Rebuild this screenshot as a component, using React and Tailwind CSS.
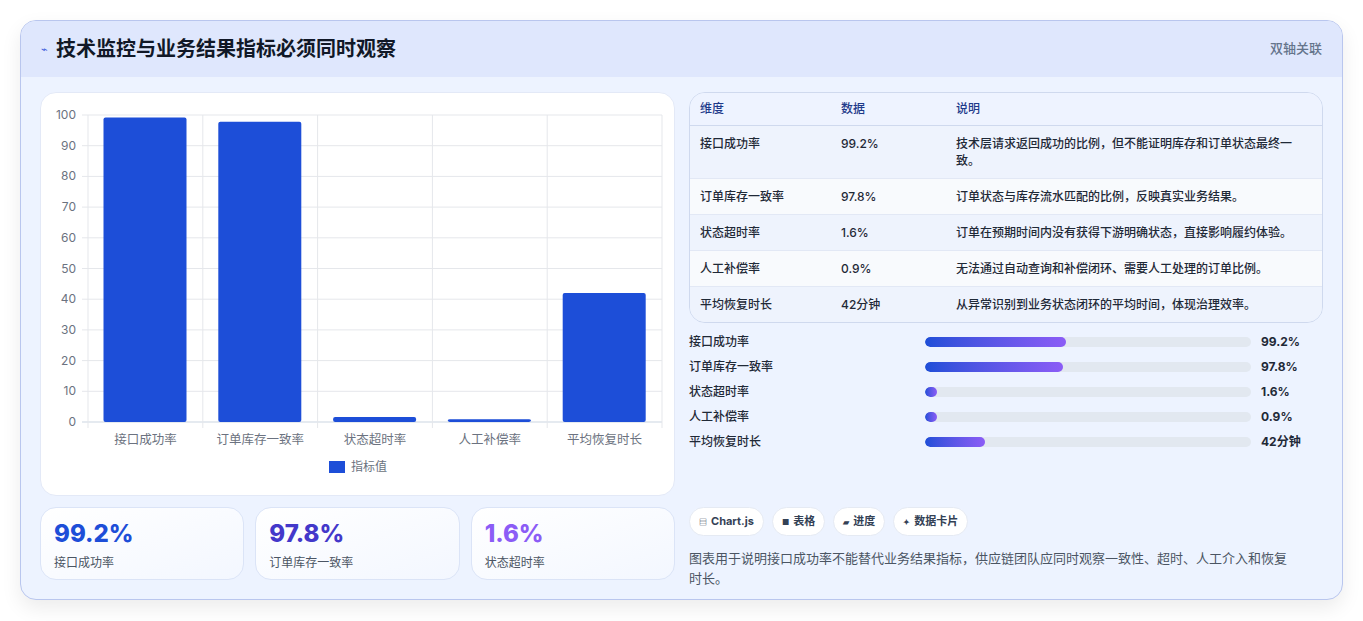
const rows = [
  ["接口成功率", "99.2%", "技术层请求返回成功的比例，但不能证明库存和订单状态最终一致。"],
  ["订单库存一致率", "97.8%", "订单状态与库存流水匹配的比例，反映真实业务结果。"],
  ["状态超时率", "1.6%", "订单在预期时间内没有获得下游明确状态，直接影响履约体验。"],
  ["人工补偿率", "0.9%", "无法通过自动查询和补偿闭环、需要人工处理的订单比例。"],
  ["平均恢复时长", "42分钟", "从异常识别到业务状态闭环的平均时间，体现治理效率。"],
];
const bars = [141, 138, 12, 12, 60];
const values = [99.2, 97.8, 1.6, 0.9, 42];

function Chart() {
  const x0 = 47, x1 = 621, y0 = 22, y1 = 329;
  const cw = (x1 - x0) / 5;
  const ticks = [0, 10, 20, 30, 40, 50, 60, 70, 80, 90, 100];
  const sy = (v) => y1 - (v / 100) * (y1 - y0);
  return (
    <svg width="635" height="404" className="block">
      {ticks.map((t) => (
        <g key={t}>
          <line x1={x0 - 6} x2={x1} y1={sy(t)} y2={sy(t)} stroke={t === 0 ? "#cbd5e1" : "#e5e7eb"} />
          <text x={x0 - 12} y={sy(t) + 4} textAnchor="end" fontSize="12" fill="#6b7280">{t}</text>
        </g>
      ))}
      {[0, 1, 2, 3, 4, 5].map((i) => (
        <line key={i} x1={x0 + i * cw} x2={x0 + i * cw} y1={y0} y2={y1 + 6} stroke="#e5e7eb" />
      ))}
      {values.map((v, i) => (
        <g key={i}>
          <rect x={x0 + i * cw + 15.5} y={sy(v)} width={83} height={Math.max(y1 - sy(v), 1.5)} rx="2" fill="#1d4ed8" />
          <text x={x0 + i * cw + cw / 2} y={351} textAnchor="middle" fontSize="12.5" fill="#6b7280">{rows[i][0]}</text>
        </g>
      ))}
      <rect x="288" y="368" width="16" height="12" fill="#1d4ed8" />
      <text x="310" y="378" fontSize="12" fill="#6b7280">指标值</text>
    </svg>
  );
}

export default function App() {
  return (
    <div className="min-h-[621px] bg-white p-5 pb-0" style={{ fontFamily: "Inter, 'Noto Sans CJK SC', sans-serif" }}>
      <div className="rounded-2xl border border-[#b9c6ee] bg-[#edf3ff] shadow-[0_8px_20px_rgba(0,0,0,0.08)] overflow-hidden h-[580px]">
        <div className="h-[56px] bg-[#dfe7fd] flex items-center justify-between px-5">
          <div className="flex items-center gap-2">
            <span className="text-[#3b5bdb] text-[11px]">⌁</span>
            <span className="text-[20px] font-bold text-[#111827]">技术监控与业务结果指标必须同时观察</span>
          </div>
          <span className="text-[13px] font-medium text-[#64748b]">双轴关联</span>
        </div>
        <div className="flex gap-[14px] pl-[19px] pt-[15px]">
          <div className="w-[635px] flex flex-col gap-[11px]">
            <div className="bg-white rounded-2xl border border-[#e3e9f7] h-[404px] overflow-hidden"><Chart /></div>
            <div className="grid grid-cols-3 gap-[11px]">
              {[["99.2%", "接口成功率", "text-[#1d4ed8]"], ["97.8%", "订单库存一致率", "text-[#4338ca]"], ["1.6%", "状态超时率", "text-[#8b5cf6]"]].map(([v, l, c]) => (
                <div key={l} className="h-[73px] rounded-2xl border border-[#dbe4f7] bg-gradient-to-br from-white to-[#f3f7ff] px-[13px] pt-[10px]">
                  <div className={`text-[24px] font-extrabold leading-[32px] ${c}`}>{v}</div>
                  <div className="text-[12px] text-[#4b5563] mt-[4px]">{l}</div>
                </div>
              ))}
            </div>
          </div>
          <div className="w-[634px]">
            <div className="rounded-2xl border border-[#cfd9ee] overflow-hidden text-[12px] font-medium text-[#1f2937]">
              <div className="flex h-[33px] items-center bg-[#eef3ff] text-[#1e3a8a] border-b border-[#cfd9ee]">
                <div className="w-[151px] pl-[10px]">维度</div>
                <div className="w-[115px]">数据</div>
                <div className="flex-1">说明</div>
              </div>
              {rows.map((r, i) => (
                <div key={i} className={`flex items-start py-[8px] border-b last:border-b-0 border-[#e2e8f5] ${i % 2 ? "bg-[#f8fafd]" : "bg-[#eef3fd]"}`}>
                  <div className="w-[151px] pl-[10px] leading-[17px] py-[1px]">{r[0]}</div>
                  <div className="w-[115px] leading-[17px] py-[1px]">{r[1]}</div>
                  <div className="flex-1 pr-[16px] leading-[17px] py-[1px]">{r[2]}</div>
                </div>
              ))}
            </div>
            <div className="mt-[10px] flex flex-col gap-[7px]">
              {rows.map((r, i) => (
                <div key={i} className="flex items-center h-[18px] text-[12px] font-medium text-[#1f2937]">
                  <div className="w-[236px]">{r[0]}</div>
                  <div className="w-[326px] h-[10px] rounded-full bg-[#e2e8f0] overflow-hidden">
                    <div className="h-full rounded-full bg-gradient-to-r from-[#1d4ed8] to-[#8b5cf6]" style={{ width: bars[i] }} />
                  </div>
                  <div className="ml-[10px] font-bold">{r[1]}</div>
                </div>
              ))}
            </div>
            <div className="mt-[56px] flex gap-[8px]">
              {[["▤", "Chart.js"], ["■", "表格"], ["▰", "进度"], ["✦", "数据卡片"]].map(([ic, t]) => (
                <span key={t} className="h-[29px] px-[9px] flex items-center gap-[4px] rounded-full bg-white border border-[#e5eaf3] text-[11px] font-bold text-[#334155]">
                  <span className="text-[8px]">{ic}</span>{t}
                </span>
              ))}
            </div>
            <p className="mt-[12px] text-[13px] leading-[20px] text-[#4b5563] pr-[24px]">
              图表用于说明接口成功率不能替代业务结果指标，供应链团队应同时观察一致性、超时、人工介入和恢复时长。
            </p>
          </div>
        </div>
      </div>
    </div>
  );
}
